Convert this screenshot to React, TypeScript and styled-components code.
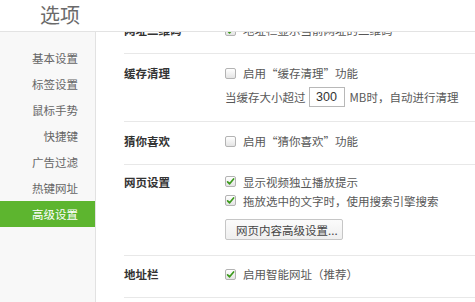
import React from "react";
import styled, { createGlobalStyle } from "styled-components";

const Global = createGlobalStyle`
  html, body { margin: 0; padding: 0; background: #fff; }
  body {
    font-family: "Noto Sans CJK SC", "Noto Sans", "Liberation Sans", sans-serif;
    font-size: 11.5px;
    color: #555;
  }
`;

const Page = styled.div`
  width: 475px;
  height: 302px;
  display: flex;
  flex-direction: column;
  overflow: hidden;
`;

const Header = styled.header`
  height: 31px;
  flex: 0 0 31px;
  border-bottom: 1px solid #e3e3e3;
  display: flex;
  align-items: center;
  padding-left: 40px;
  background: #fff;
  position: relative;
  z-index: 2;
`;

const Title = styled.h1`
  margin: 0;
  font-size: 20px;
  font-weight: normal;
  color: #6a6a6a;
  line-height: 1;
  margin-top: -2px;
`;

const Main = styled.div`
  flex: 1;
  display: flex;
  min-height: 0;
`;

const Sidebar = styled.nav`
  width: 95px;
  flex: 0 0 95px;
  background: #f8f8f8;
  border-right: 1px solid #e2e2e2;
  padding-top: 13px;
  display: flex;
  flex-direction: column;
`;

const NavItem = styled.div<{ $active?: boolean }>`
  height: 26px;
  line-height: 26px;
  text-align: right;
  padding-right: 17px;
  font-size: 11.5px;
  color: ${(p) => (p.$active ? "#fff" : "#666")};
  background: ${(p) => (p.$active ? "#5db52f" : "transparent")};
`;

const Content = styled.div`
  flex: 1;
  overflow: hidden;
  background: #fff;
  display: flex;
  flex-direction: column;
`;

const Row = styled.section<{ $pt?: number; $pb?: number; $first?: boolean }>`
  margin-left: 28px;
  margin-top: ${(p) => (p.$first ? "-21px" : "0")};
  border-bottom: 1px solid #e8e8e8;
  padding: ${(p) => p.$pt ?? 9}px 0 ${(p) => p.$pb ?? 13}px;
  display: flex;
  flex: 0 0 auto;
`;

const Label = styled.div`
  width: 101px;
  flex: 0 0 101px;
  line-height: 20px;
  font-weight: bold;
  color: #333;
  font-size: 11.5px;
`;

const Body = styled.div<{ $gap?: number }>`
  display: flex;
  flex-direction: column;
  gap: ${(p) => p.$gap ?? 0}px;
`;

const Line = styled.div<{ $h?: number }>`
  height: ${(p) => p.$h ?? 20}px;
  display: flex;
  align-items: center;
  white-space: nowrap;
  color: #585858;
`;

const Box = styled.span`
  width: 11px;
  height: 11px;
  box-sizing: border-box;
  border: 1px solid #b3b3b3;
  border-radius: 2px;
  background: linear-gradient(#ffffff, #e4e4e4);
  margin-right: 7px;
  display: inline-flex;
  align-items: center;
  justify-content: center;
  flex: 0 0 auto;
`;

const NumberInput = styled.span`
  width: 36px;
  height: 20px;
  box-sizing: border-box;
  border: 1px solid #b8b8b8;
  margin: 0 5px 0 3px;
  display: inline-flex;
  align-items: center;
  justify-content: center;
  color: #333;
  font-family: "Liberation Sans", "Noto Sans", sans-serif;
  font-size: 12.5px;
`;

const Button = styled.div`
  align-self: flex-start;
  width: 118px;
  height: 21px;
  box-sizing: border-box;
  border: 1px solid #c6c6c6;
  border-radius: 2px;
  background: linear-gradient(#fbfbfb, #efefef);
  display: flex;
  align-items: center;
  padding-left: 10px;
  color: #444;
  white-space: nowrap;
`;

const Check = ({ on }: { on?: boolean }) => (
  <Box>
    {on && (
      <svg width="9" height="9" viewBox="0 0 9 9">
        <path d="M1.6 4.8 L3.6 6.8 L7.6 2" fill="none" stroke="#3c9a1c" strokeWidth="1.7" strokeLinecap="round" strokeLinejoin="round" />
      </svg>
    )}
  </Box>
);

const navs = ["基本设置", "标签设置", "鼠标手势", "快捷键", "广告过滤", "热键网址", "高级设置"];

export default function App() {
  return (
    <>
      <Global />
      <Page>
        <Header>
          <Title>选项</Title>
        </Header>
        <Main>
          <Sidebar>
            {navs.map((n) => (
              <NavItem key={n} $active={n === "高级设置"}>
                {n}
              </NavItem>
            ))}
          </Sidebar>
          <Content>
            <Row $first>
              <Label>网址二维码</Label>
              <Body>
                <Line>
                  <Check on />
                  地址栏显示当前网址的二维码
                </Line>
              </Body>
            </Row>
            <Row $pb={14}>
              <Label>缓存清理</Label>
              <Body $gap={4}>
                <Line>
                  <Check />
                  启用“缓存清理”功能
                </Line>
                <Line>
                  当缓存大小超过
                  <NumberInput>300</NumberInput>
                  MB时，自动进行清理
                </Line>
              </Body>
            </Row>
            <Row>
              <Label>猜你喜欢</Label>
              <Body>
                <Line>
                  <Check />
                  启用“猜你喜欢”功能
                </Line>
              </Body>
            </Row>
            <Row $pt={7} $pb={15}>
              <Label>网页设置</Label>
              <Body>
                <Line $h={19}>
                  <Check on />
                  显示视频独立播放提示
                </Line>
                <Line $h={19}>
                  <Check on />
                  拖放选中的文字时，使用搜索引擎搜索
                </Line>
                <Button style={{ marginTop: 9 }}>网页内容高级设置...</Button>
              </Body>
            </Row>
            <Row $pt={8}>
              <Label>地址栏</Label>
              <Body>
                <Line>
                  <Check on />
                  启用智能网址（推荐）
                </Line>
              </Body>
            </Row>
          </Content>
        </Main>
      </Page>
    </>
  );
}
